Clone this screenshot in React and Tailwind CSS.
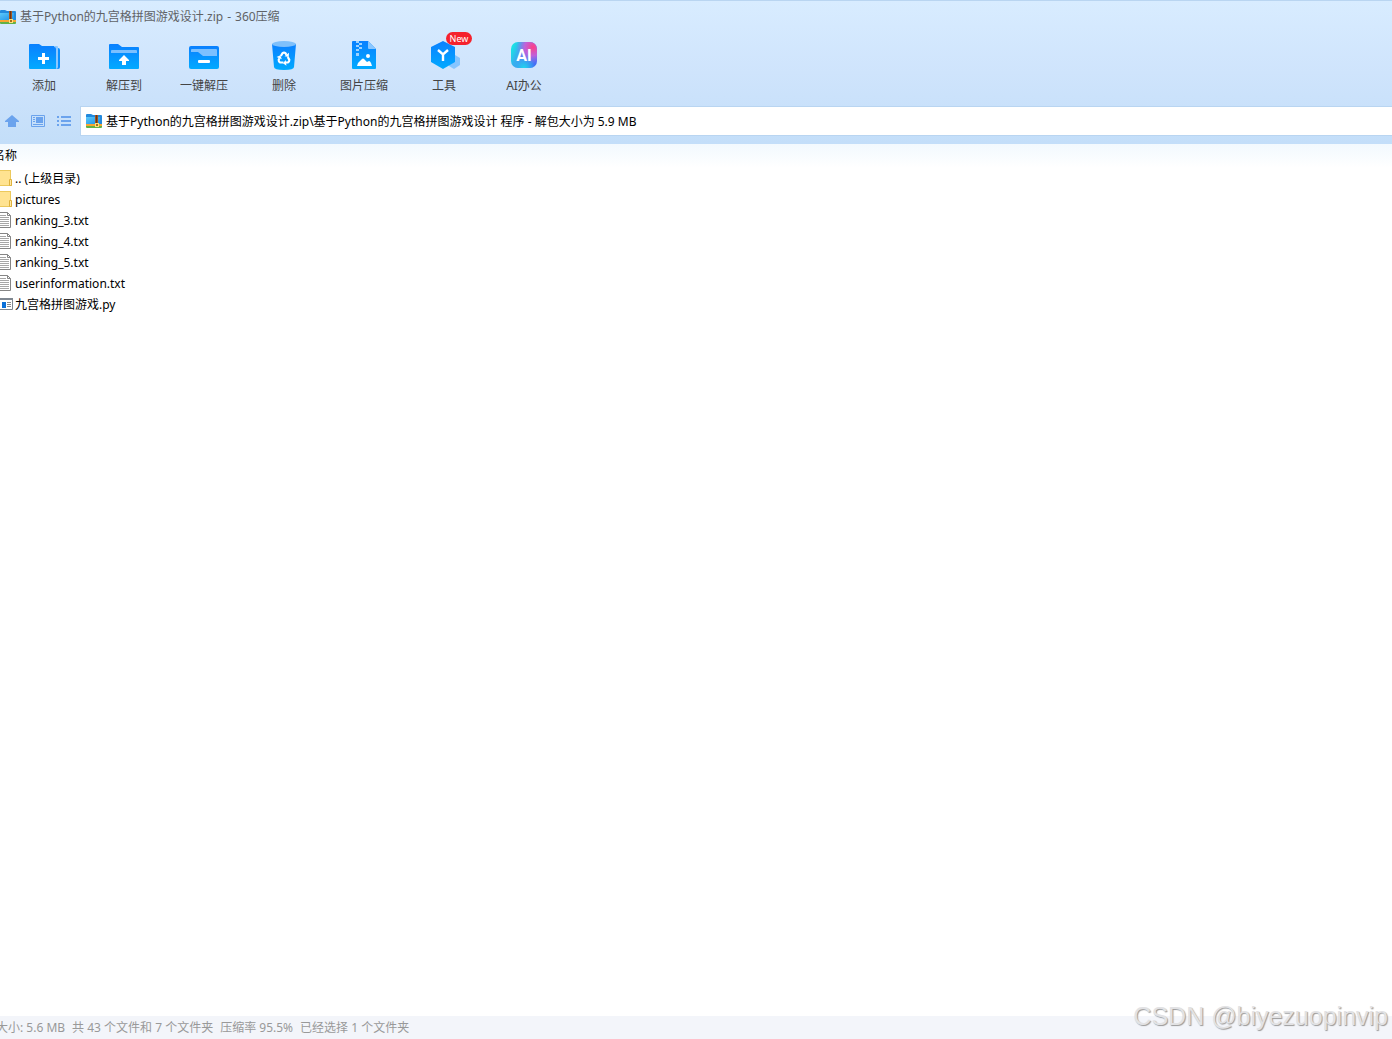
import React, { useState } from 'react';

const ARCHIVE = '基于Python的九宫格拼图游戏设计.zip';

function ZipIcon() {
    return (
        <svg width="16" height="16" viewBox="0 0 16 16" className="shrink-0" aria-hidden="true">
            <defs>
                <linearGradient id="zipFill" x1="0" y1="0" x2="1" y2="1">
                    <stop offset="0" stopColor="#5cc8fa" />
                    <stop offset="1" stopColor="#1c8fe6" />
                </linearGradient>
            </defs>
            <path d="M0 2q0-1 1-1h4l2 1h8q1 0 1 1v8H0z" fill="#2389dc" />
            <path d="M0 4h14v7H0z" fill="url(#zipFill)" />
            <path d="M0 11h16v2H0z" fill="#f7a531" />
            <path d="M0 13h16v1q0 1-1 1H1q-1 0-1-1z" fill="#62b146" />
            <path d="M9 2h3v9H9z" fill="#a3561f" />
            <path d="M10 2h1v8h-1z" fill="#6b3414" />
            <path d="M9 10h4v4H9z" fill="#fbe07a" />
            <path d="M10 11h2v2h-2z" fill="#a5701e" />
        </svg>
    );
}

// shared vertical blue gradient for the toolbar drawings
function BlueFill({ id }) {
    return (
        <defs>
            <linearGradient id={id} x1="0" y1="0" x2="0" y2="1">
                <stop offset="0" stopColor="#0a80ff" />
                <stop offset="1" stopColor="#02aaff" />
            </linearGradient>
        </defs>
    );
}

function AddIcon() {
    return (
        <svg width="32" height="32" viewBox="0 0 32 32" aria-hidden="true">
            <BlueFill id="addFill" />
            <path d="M27 8h3q2 0 2 2v17q0 2-2 2h-3z" fill="#0a8fff" />
            <path d="M1 5q0-1 1-1h9l3 2h14v23H2q-1 0-1-1z" fill="url(#addFill)" />
            <path d="M26 6h3q1 0 1 1v20q0 2-2 2z" fill="#8cc8ff" />
            <path d="M12 7h14q2 0 2 2v18q0 2-2 2H12z" fill="url(#addFill)" />
            <path d="M14 13h3v4h4v3h-4v4h-3v-4h-4v-3h4z" fill="#fff" />
        </svg>
    );
}

function ExtractIcon() {
    return (
        <svg width="32" height="32" viewBox="0 0 32 32" aria-hidden="true">
            <BlueFill id="extractFill" />
            <path d="M1 5q0-1 1-1h8l4 3h16q1 0 1 1v20q0 1-1 1H2q-1 0-1-1z" fill="url(#extractFill)" />
            <path d="M3 13v-2q0-1 1-1h24q1 0 1 1v2z" fill="#7cc0ff" />
            <path d="M16 15l5 5v1h-3v4h-4v-4h-3v-1z" fill="#fff" />
        </svg>
    );
}

function QuickExtractIcon() {
    return (
        <svg width="32" height="32" viewBox="0 0 32 32" aria-hidden="true">
            <BlueFill id="quickFill" />
            <rect x="1" y="6" width="30" height="23" rx="2" fill="url(#quickFill)" />
            <path d="M3 10q0-1 1-1h24q1 0 1 1v6H15l-5-4H3z" fill="#7cc0ff" />
            <rect x="10" y="20" width="12" height="3" rx="1" fill="#fff" />
        </svg>
    );
}

function TrashIcon() {
    return (
        <svg width="32" height="32" viewBox="0 0 32 32" aria-hidden="true">
            <BlueFill id="trashFill" />
            <path d="M4 4h24l-2 23q0 3-10 3T6 27z" fill="url(#trashFill)" />
            <ellipse cx="16" cy="4" rx="12" ry="3" fill="#7fc0fb" />
            {/* recycling mark: one bent arrow turned three times */}
            {['rotate(0 16 18.500)', 'rotate(120 16 18.500)', 'rotate(240 16 18.500)'].map(turn => (
                <g key={turn} transform={turn}>
                    <path d="M12.800 16l1.700-2.800q1.500-1 3 0l1 1.600" fill="none" stroke="#fff" strokeWidth="2.200" />
                    <path d="M16.500 16.200l4.200.8.300-4.200z" fill="#fff" />
                </g>
            ))}
        </svg>
    );
}

function PictureIcon() {
    return (
        <svg width="32" height="32" viewBox="0 0 32 32" aria-hidden="true">
            <BlueFill id="pictureFill" />
            <path d="M4 2q0-1 1-1h15l8 8v19q0 1-1 1H5q-1 0-1-1z" fill="url(#pictureFill)" />
            <path d="M20 1l8 8h-7q-1 0-1-1z" fill="#8ac7ff" />
            <path d="M8 1h3v2H8zM11 3h3v2h-3zM8 5h3v2H8zM11 7h3v2h-3zM8 9h3v2H8zM8 13h3v3H8z" fill="#9ed2ff" />
            <circle cx="20" cy="16" r="2" fill="#fff" />
            <path d="M9 26l1-3 4-4q1-1 2 0l3 3 2-1q1 0 2 2l1 3z" fill="#fff" />
        </svg>
    );
}

function ToolsIcon() {
    return (
        <svg width="32" height="32" viewBox="0 0 32 32" aria-hidden="true">
            <BlueFill id="toolsFill" />
            <path d="M27 15l5 3v7l-6 4-5-3v-8z" fill="#86c5ff" />
            <path d="M15 1l12 6v15l-12 7-12-7V7z" fill="url(#toolsFill)" />
            <path d="M10 10l5 4.500 5-4.500M15 14v7" fill="none" stroke="#fff" strokeWidth="2.400" />
        </svg>
    );
}

function AiIcon() {
    return (
        <svg width="32" height="32" viewBox="0 0 32 32" aria-hidden="true">
            <defs>
                <linearGradient id="aiBase" x1="0" y1="0.3" x2="1" y2="0.7">
                    <stop offset="0" stopColor="#19e5e5" />
                    <stop offset="0.45" stopColor="#4a8cf4" />
                    <stop offset="1" stopColor="#426bf5" />
                </linearGradient>
                <radialGradient id="aiPink" cx="0.85" cy="0.2" r="0.65">
                    <stop offset="0" stopColor="#ff3f83" />
                    <stop offset="0.5" stopColor="#d45bd5" stopOpacity="0.85" />
                    <stop offset="1" stopColor="#9a70ed" stopOpacity="0" />
                </radialGradient>
                <radialGradient id="aiCyan" cx="0.5" cy="1" r="0.45">
                    <stop offset="0" stopColor="#20d8ee" />
                    <stop offset="1" stopColor="#20d8ee" stopOpacity="0" />
                </radialGradient>
            </defs>
            <rect x="3" y="2" width="26" height="26" rx="7" fill="url(#aiBase)" />
            <rect x="3" y="2" width="26" height="26" rx="7" fill="url(#aiPink)" />
            <rect x="3" y="2" width="26" height="26" rx="7" fill="url(#aiCyan)" />
            <text x="16" y="21" textAnchor="middle" fill="#fff" className="font-['Roboto',sans-serif] text-[16px] font-bold">AI</text>
        </svg>
    );
}

function FolderIcon() {
    return (
        <svg width="16" height="16" viewBox="0 0 16 16" aria-hidden="true">
            <path d="M0 0h15v10h1v6H0z" fill="#ecc95c" />
            <path d="M0 1h14v14H0z" fill="#ffe391" />
            <path d="M13.500 9.500h2v6h-2z" fill="#ffe9a6" stroke="#dfb23e" />
        </svg>
    );
}

function TextFileIcon() {
    return (
        <svg width="16" height="16" viewBox="0 0 16 16" aria-hidden="true">
            <path d="M1.500.5h10l3 3v12h-13z" fill="#fff" stroke="#858585" />
            <path d="M11.500.5v3h3" fill="none" stroke="#858585" />
            <path d="M3 3.500h7M3 5.500h10M3 7.500h10M3 9.500h10M3 11.500h10M3 13.500h10" stroke="#a6a6a6" />
        </svg>
    );
}

function ScriptIcon() {
    return (
        <svg width="17" height="16" viewBox="0 0 17 16" aria-hidden="true">
            <path d="M.5 2.500h16v11H.5z" fill="#fff" stroke="#7f8790" />
            <path d="M0 2h17v2H0z" fill="#7f8790" />
            <path d="M6 6h4v6H6z" fill="#0a70d8" />
            <path d="M11 6.500h4M11 8.500h4M11 10.500h4" stroke="#8a8a8a" />
        </svg>
    );
}

const TOOLS = [
    { label: '添加', Icon: AddIcon },
    { label: '解压到', Icon: ExtractIcon },
    { label: '一键解压', Icon: QuickExtractIcon },
    { label: '删除', Icon: TrashIcon },
    { label: '图片压缩', Icon: PictureIcon },
    { label: '工具', Icon: ToolsIcon, badge: 'New' },
    { label: 'AI办公', Icon: AiIcon },
];

const FILES = [
    { name: '.. (上级目录)', Icon: FolderIcon },
    { name: 'pictures', Icon: FolderIcon },
    { name: 'ranking_3.txt', Icon: TextFileIcon },
    { name: 'ranking_4.txt', Icon: TextFileIcon },
    { name: 'ranking_5.txt', Icon: TextFileIcon },
    { name: 'userinformation.txt', Icon: TextFileIcon },
    { name: '九宫格拼图游戏.py', Icon: ScriptIcon },
];

const STATUS = ['大小: 5.6 MB', '共 43 个文件和 7 个文件夹', '压缩率 95.5%', '已经选择 1 个文件夹'];

export default function App() {
    const [path, setPath] = useState(ARCHIVE + '\\基于Python的九宫格拼图游戏设计 程序 - 解包大小为 5.9 MB');

    return (
        <div className="relative flex min-h-screen flex-col overflow-hidden bg-white font-['Noto_Sans','Noto_Sans_CJK_SC',sans-serif] text-xs text-black">
            <header className="border-t border-[#b9d5f1] bg-linear-to-b from-[#d8ecff] via-[#cfe4fc] to-[#c3def9]">
                <div className="flex h-8 items-center gap-1 text-[#5f6266]">
                    <ZipIcon />
                    <h1 className="flex gap-1">
                        <span>{ARCHIVE}</span>
                        <span>-</span>
                        <span>360压缩</span>
                    </h1>
                </div>

                <nav className="flex h-[73px] px-1 pt-[7px]">
                    {TOOLS.map(({ label, Icon, badge }) => (
                        <button key={label} type="button" className="relative flex w-20 flex-col items-center gap-1 text-[#444]">
                            <Icon />
                            <span className="leading-5">{label}</span>
                            {badge && (
                                <span className="absolute -top-2 left-[42px] h-[13px] w-[26px] rounded-full bg-[#f5222d] text-center text-[9px] leading-[13px] text-white">
                                    {badge}
                                </span>
                            )}
                        </button>
                    ))}
                </nav>

                <div className="flex pb-2">
                    <div className="flex w-20 shrink-0 items-center gap-2.5 pl-1">
                        <button type="button" aria-label="Up">
                            <svg width="16" height="16" viewBox="0 0 16 16" fill="#6ba3ed" aria-hidden="true">
                                <path d="M8 2l7 6v1h-3v5H4V9H1V8z" />
                            </svg>
                        </button>
                        <button type="button" aria-label="Preview">
                            <svg width="16" height="16" viewBox="0 0 16 16" fill="#6ba3ed" aria-hidden="true">
                                <path d="M1.500 2.500h13v11h-13z" fill="none" stroke="#6ba3ed" />
                                <path d="M3 4h2v1H3zM3 6h2v1H3zM3 8h2v1H3zM6 4h7v6H6zM3 11h10v1H3z" />
                            </svg>
                        </button>
                        <button type="button" aria-label="List">
                            <svg width="16" height="16" viewBox="0 0 16 16" fill="#6ba3ed" aria-hidden="true">
                                <path d="M1 3h2v2H1zM5 3h10v2H5zM1 7h2v2H1zM5 7h10v2H5zM1 11h2v2H1zM5 11h10v2H5z" />
                            </svg>
                        </button>
                    </div>
                    <label className="flex h-[30px] flex-1 items-center gap-1 border border-r-0 border-[#b9d5f1] bg-white pl-[5px]">
                        <ZipIcon />
                        <input
                            type="text"
                            aria-label="Path"
                            value={path}
                            onChange={e => setPath(e.target.value)}
                            className="h-5 flex-1 bg-transparent outline-none"
                        />
                    </label>
                </div>
            </header>

            {/* the list is scrolled a little past its left edge */}
            <main className="-ml-2 flex-1">
                <table className="w-full">
                    <thead>
                        <tr className="h-6 bg-linear-to-b from-[#f2f9fe] to-white">
                            <th className="pl-px text-left font-normal">名称</th>
                        </tr>
                    </thead>
                    <tbody>
                        {FILES.map(({ name, Icon }) => (
                            <tr key={name} className="h-[21px]">
                                <td className="p-0">
                                    <div className="flex items-center pl-1">
                                        <span className="w-[19px] shrink-0 pb-px"><Icon /></span>
                                        <span className="leading-5">{name}</span>
                                    </div>
                                </td>
                            </tr>
                        ))}
                    </tbody>
                </table>
            </main>

            <footer className="flex h-[23px] items-center bg-[#f3f5fa] text-[#999]">
                <p className="-ml-1 flex gap-[7px]">
                    {STATUS.map(part => <span key={part}>{part}</span>)}
                </p>
            </footer>

            <div className="pointer-events-none absolute right-1 bottom-[7px] font-['Liberation_Sans',sans-serif] text-[25px] leading-8 text-[#e2e2e4] [text-shadow:1px_1px_1px_#999]">
                CSDN @biyezuopinvip
            </div>
        </div>
    );
}
